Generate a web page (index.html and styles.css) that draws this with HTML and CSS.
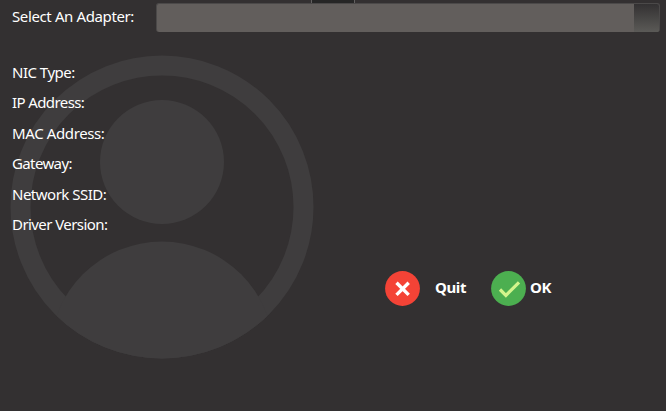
FILE: index.html
```html
<!DOCTYPE html>
<html lang="en">
<head>
<meta charset="utf-8">
<title>Select An Adapter</title>
<link rel="stylesheet" href="styles.css">
</head>
<body>
<main class="window">
  <svg class="watermark" width="304" height="304" viewBox="0 0 304 304" aria-hidden="true">
    <defs><clipPath id="disc"><circle cx="152" cy="152" r="151.5"/></clipPath></defs>
    <circle cx="152" cy="152" r="141.5" fill="none" stroke="#3f3d3e" stroke-width="20"/>
    <circle cx="152" cy="107" r="62" fill="#3f3d3e"/>
    <circle cx="152" cy="298.5" r="112" fill="#3f3d3e" clip-path="url(#disc)"/>
  </svg>
  <div class="tab"></div>
  <div class="adapter">
    <label class="adapter-label">Select An Adapter:</label>
    <div class="combo"><div class="combo-button"></div></div>
  </div>
  <div class="details">
    <div class="row nic">NIC Type:</div>
    <div class="row ip">IP Address:</div>
    <div class="row mac">MAC Address:</div>
    <div class="row gateway">Gateway:</div>
    <div class="row ssid">Network SSID:</div>
    <div class="row driver">Driver Version:</div>
  </div>
  <div class="actions">
    <button class="action quit">
      <svg width="35" height="35" viewBox="0 0 35 35" aria-hidden="true">
        <circle cx="17.5" cy="17.5" r="17.4" fill="#f44336"/>
        <path d="M11.5 11.7l12.2 12.2M23.7 11.7L11.5 23.9" stroke="#fff" stroke-width="3.4"/>
      </svg>
      <span>Quit</span>
    </button>
    <button class="action ok">
      <svg width="35" height="35" viewBox="0 0 35 35" aria-hidden="true">
        <circle cx="17.5" cy="17.5" r="17.4" fill="#4caf50"/>
        <path d="M9 18.5l5.9 5.9L28 11.3" fill="none" stroke="#d2f58c" stroke-width="3.2"/>
      </svg>
      <span>OK</span>
    </button>
  </div>
</main>
</body>
</html>
```

FILE: styles.css
```css
* { box-sizing: border-box; }
body {
  margin: 0;
  background: #333031;
  color: #fff;
  font: 15px/20px "Noto Sans", "Open Sans", sans-serif;
}
.window {
  position: relative;
  width: 666px;
  height: 411px;
  overflow: hidden;
}
.watermark { position: absolute; left: 10px; top: 55px; }
.tab {
  position: absolute;
  left: 311px;
  top: 0;
  width: 44px;
  height: 4px;
  background: #262626;
  border: solid #626060;
  border-width: 0 1px;
}
.adapter { position: relative; display: flex; padding: 3px 6px 0 12px; }
.adapter-label {
  width: 144px;
  padding-top: 3px;
  white-space: nowrap;
  letter-spacing: -0.38px;
}
.combo {
  flex: 1;
  display: flex;
  justify-content: flex-end;
  height: 29px;
  border: 1px solid #4b4949;
  border-bottom-width: 0;
  border-radius: 3px;
  background: #625e5c;
  overflow: hidden;
}
.combo-button { width: 25px; background: linear-gradient(#333132, #5b5a57); }
.details { position: relative; padding: 30px 0 0 12px; }
.row { height: 30.4px; white-space: nowrap; letter-spacing: -0.5px; }
.ip { letter-spacing: -0.6px; }
.mac { letter-spacing: -0.38px; }
.gateway { letter-spacing: -0.62px; }
.driver { letter-spacing: -0.57px; }
.actions { position: relative; display: flex; padding: 26.6px 0 0 385px; }
.action {
  display: flex;
  align-items: center;
  height: 35px;
  padding: 0;
  border: 0;
  background: none;
  color: #fff;
  font: bold 15px/20px "Noto Sans", "Open Sans", sans-serif;
}
.action span { padding-bottom: 2px; }
.quit { width: 106px; gap: 15px; letter-spacing: -0.4px; }
.ok { gap: 4px; letter-spacing: -0.3px; }
```
